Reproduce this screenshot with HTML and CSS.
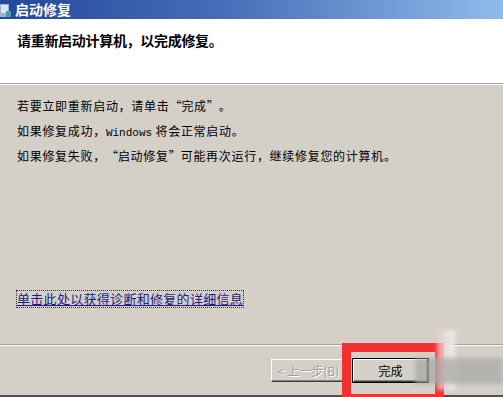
FILE: index.html
```html
<!DOCTYPE html>
<html lang="zh-CN">
<head>
  <meta charset="UTF-8">
  <meta name="viewport" content="width=device-width, initial-scale=1.0">
  <title>启动修复</title>
  <link rel="stylesheet" href="styles.css">
</head>
<body>

  <div class="dialog">
    <div class="titlebar">
      <svg class="app-icon" width="12" height="16" viewBox="0 0 12 16">
        <rect x="0" y="2" width="9" height="13" fill="#9fb4c8"/>
        <rect x="1" y="3" width="7" height="8" fill="#d8e4ee"/>
        <rect x="6" y="9" width="5" height="6" fill="#3fa0b0"/>
      </svg>
      <span class="title">启动修复</span>
    </div>

    <div class="header">
      <h1>请重新启动计算机，以完成修复。</h1>
    </div>

    <div class="content">
      <p>若要立即重新启动，请单击<span class="ql">“</span>完成<span class="qr">”</span>。</p>
      <p>如果修复成功，<span class="latin">Windows</span> 将会正常启动。</p>
      <p>如果修复失败，<span class="ql">“</span>启动修复<span class="qr">”</span>可能再次运行，继续修复您的计算机。</p>
      <a class="details" href="#">单击此处以获得诊断和修复的详细信息</a>
    </div>

    <div class="footer">
      <button class="btn" disabled>&lt; 上一步(B)</button>
      <button class="btn btn-default">完成</button>
    </div>

    <!-- 截图上的标注和水印 -->
    <div class="mark"></div>
    <div class="ghost">
      <div class="ghost-face"></div>
      <div class="ghost-band"></div>
    </div>
  </div>

</body>
</html>
```

FILE: styles.css
```css
* {
  margin: 0;
  padding: 0;
  box-sizing: border-box;
}

body {
  width: 503px;
  height: 397px;
  overflow: hidden;
  background-color: #d4d0c8;
  font-family: "Noto Sans CJK SC", "Noto Sans", sans-serif;
  color: #000;
}

.dialog {
  position: relative;
  height: 397px;
  display: flex;
  flex-direction: column;
}

.titlebar {
  height: 19px;
  display: flex;
  align-items: center;
  gap: 3px;
  background: linear-gradient(to right, #24479a 0%, #476eb8 45%, #8fbbea 100%);
}

.app-icon {
  display: block;
}

.title {
  color: #fff;
  font-size: 14px;
  font-weight: bold;
  line-height: 19px;
}

.header {
  height: 65px;
  background-color: #fff;
  padding: 11px 0 0 17px;
  border-bottom: 1px solid #a0a0a0;
  box-shadow: 0 1px 0 #fff;
}

.header h1 {
  font-size: 14px;
  font-weight: bold;
  line-height: 20px;
  letter-spacing: -0.3px;
}

.content {
  flex: 1;
  padding: 9px 0 0 17px;
  display: flex;
  flex-direction: column;
  align-items: flex-start;
  border-bottom: 1px solid #a0a0a0;
}

.content p {
  height: 25px;
  font-size: 12px;
  line-height: 25px;
  letter-spacing: 0.7px;
  white-space: nowrap;
}

/* 全角引号 */
.ql,
.qr {
  display: inline-block;
  width: 12px;
}

.ql {
  text-align: right;
}

.latin {
  font-family: "Liberation Mono", monospace;
  font-size: 11px;
  letter-spacing: 0;
}

.details {
  margin-top: 123px;
  font-size: 13px;
  line-height: 16px;
  letter-spacing: 0.3px;
  color: #1c1c86;
  outline: 1px dotted #333;
}

.footer {
  height: 52px;
  border-top: 1px solid #fff;
  border-bottom: 2px solid #505050;
  display: flex;
  justify-content: flex-end;
  align-items: flex-start;
  gap: 7px;
  padding: 13px 75px 0 0;
}

.btn {
  width: 75px;
  height: 23px;
  font-family: "Noto Sans CJK SC", sans-serif;
  font-size: 12px;
  background-color: #d4d0c8;
  border: 1px solid;
  border-color: #fff #404040 #404040 #fff;
  box-shadow: inset -1px -1px 0 #808080;
}

.btn:disabled {
  color: #a0a0a0;
  text-shadow: 1px 1px 0 #fff;
}

.btn-default {
  outline: 1px solid #000;
}

.mark {
  position: absolute;
  left: 342px;
  top: 343px;
  width: 102px;
  height: 60px;
  border: 9px solid #f23030;
}

.ghost {
  position: absolute;
  left: 415px;
  top: 330px;
  width: 88px;
  height: 62px;
  filter: blur(2px);
}

.ghost-face {
  position: absolute;
  left: 22px;
  top: 0;
  width: 18px;
  height: 60px;
  background: linear-gradient(to right, rgba(235, 200, 200, 0.7), rgba(240, 240, 238, 0.9));
}

.ghost-band {
  position: absolute;
  left: 0;
  top: 28px;
  width: 88px;
  height: 26px;
  background: rgba(170, 170, 168, 0.75);
}
```
